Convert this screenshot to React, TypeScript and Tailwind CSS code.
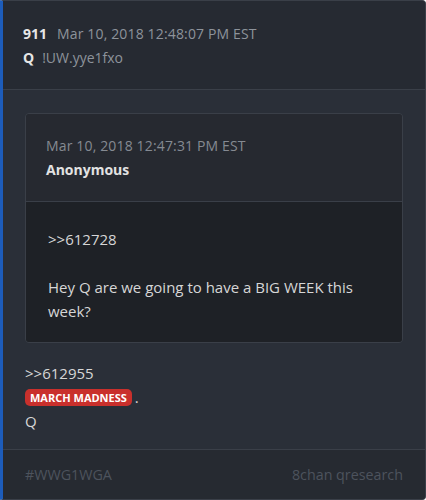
import React from "react";

export default function App() {
  return (
    <div
      className="w-[426px] h-[500px] flex flex-col bg-[#2a2f38] border border-[#3a3f48] border-l-[3px] border-l-[#1d5cba] rounded-r-[4px] overflow-hidden text-[14px] leading-[24px]"
      style={{ fontFamily: '"Open Sans", "Noto Sans", sans-serif' }}
    >
      <div className="h-[89px] shrink-0 bg-[#262a32] border-b border-[#3a3f48] pl-[20px] pt-[21px]">
        <div className="flex items-baseline">
          <span className="font-bold text-[#e6e6e6]">911</span>
          <span className="ml-[10px] text-[#8d939b] tracking-[0.15px]">Mar 10, 2018 12:48:07 PM EST</span>
        </div>
        <div className="flex items-baseline">
          <span className="font-bold text-[#e6e6e6]">Q</span>
          <span className="ml-[8px] text-[#8d939b]">!UW.yye1fxo</span>
        </div>
      </div>
      <div className="flex-1 px-[22px] pt-[23px]">
        <div className="border border-[#3a3f48] rounded-[4px] overflow-hidden">
          <div className="h-[88px] bg-[#262930] border-b border-[#3a3f48] px-[20px] pt-[20px]">
            <div className="text-[#858a92] tracking-[0.15px]">Mar 10, 2018 12:47:31 PM EST</div>
            <div className="font-bold text-[#e2e2e2]">Anonymous</div>
          </div>
          <div className="bg-[#1e2126] px-[22px] pt-[25px] pb-[19px] text-[15px] text-[#d6d6d6]">
            <div>&gt;&gt;612728</div>
            <div className="mt-[24px]">Hey Q are we going to have a BIG WEEK this week?</div>
          </div>
        </div>
        <div className="mt-[18px] text-[15px] text-[#d6d6d6]">
          <div>&gt;&gt;612955</div>
          <div className="flex items-center h-[24px]">
            <span className="bg-[#c9302c] text-white font-bold text-[11px] leading-[17px] px-[5px] rounded-[5px]">
              MARCH MADNESS
            </span>
            <span className="ml-[3px]">.</span>
          </div>
          <div>Q</div>
        </div>
      </div>
      <div className="h-[50px] shrink-0 bg-[#262a31] border-t border-[#3a3f48] flex items-center justify-between pl-[22px] pr-[22px] text-[14.3px] text-[#4d535d]">
        <span>#WWG1WGA</span>
        <span>8chan qresearch</span>
      </div>
    </div>
  );
}
